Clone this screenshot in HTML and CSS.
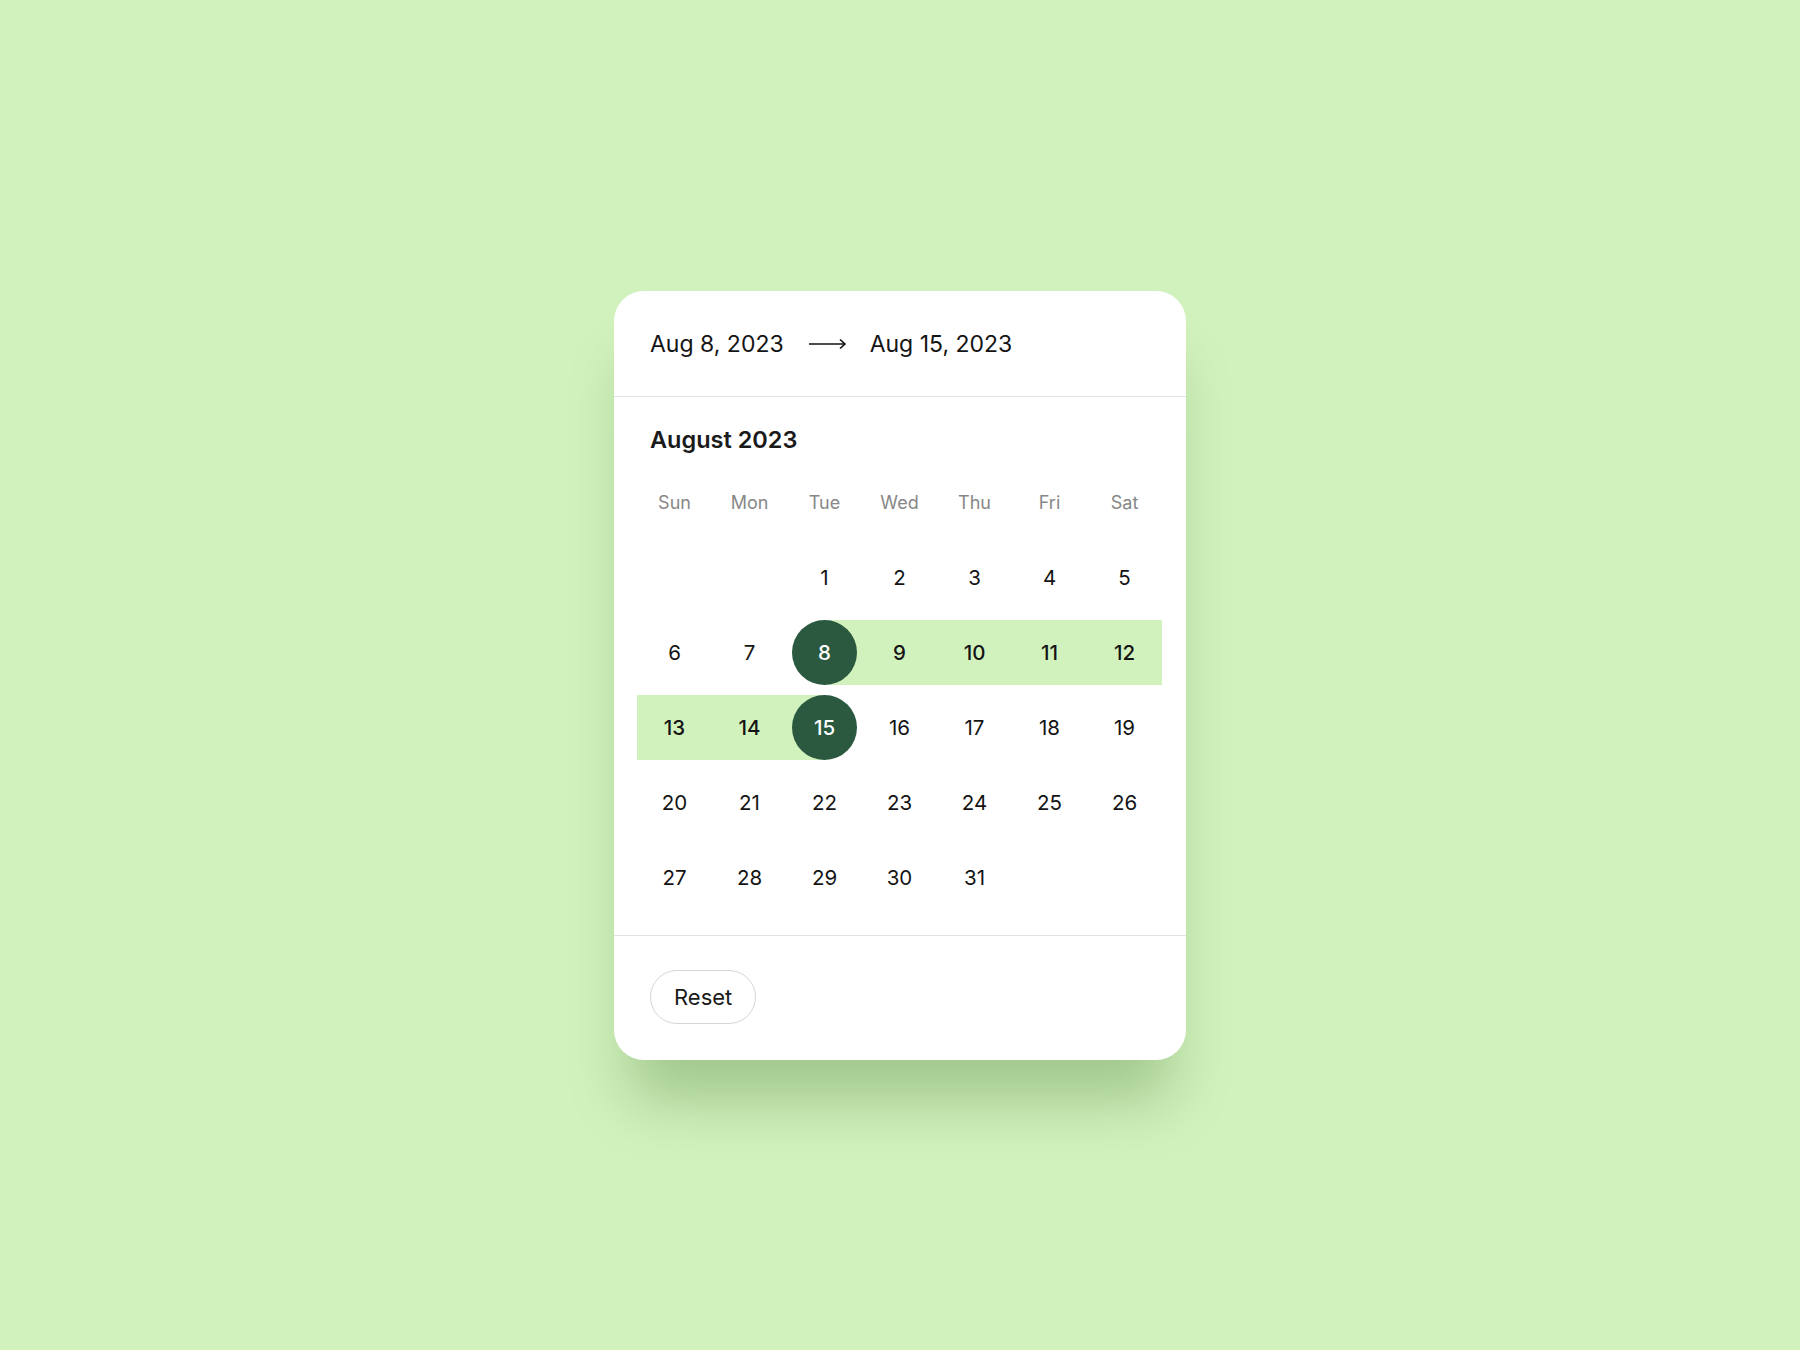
FILE: index.html
```html
<!DOCTYPE html>
<html lang="en">

<head>
    <meta charset="UTF-8">
    <meta name="viewport" content="width=device-width, initial-scale=1.0">
    <title>Date Range</title>
    <link rel="stylesheet" href="styles.css">
</head>

<body>
    <div class="picker">
        <!-- Selected range -->
        <div class="range-head">
            <span>Aug 8, 2023</span>
            <svg class="arrow" width="38" height="12" viewBox="0 0 38 12" fill="none" stroke="#111" stroke-width="1.6">
                <path d="M0 6h36" />
                <path d="M31 1.5l5 4.5-5 4.5" />
            </svg>
            <span>Aug 15, 2023</span>
        </div>

        <!-- Month grid -->
        <div class="month">
            <h2>August 2023</h2>
            <div class="grid">
                <div class="wd">Sun</div>
                <div class="wd">Mon</div>
                <div class="wd">Tue</div>
                <div class="wd">Wed</div>
                <div class="wd">Thu</div>
                <div class="wd">Fri</div>
                <div class="wd">Sat</div>

                <div class="day"></div>
                <div class="day"></div>
                <div class="day"><span>1</span></div>
                <div class="day"><span>2</span></div>
                <div class="day"><span>3</span></div>
                <div class="day"><span>4</span></div>
                <div class="day"><span>5</span></div>

                <div class="day"><span>6</span></div>
                <div class="day"><span>7</span></div>
                <div class="day start"><span>8</span></div>
                <div class="day in-range"><span>9</span></div>
                <div class="day in-range"><span>10</span></div>
                <div class="day in-range"><span>11</span></div>
                <div class="day in-range"><span>12</span></div>

                <div class="day in-range"><span>13</span></div>
                <div class="day in-range"><span>14</span></div>
                <div class="day end"><span>15</span></div>
                <div class="day"><span>16</span></div>
                <div class="day"><span>17</span></div>
                <div class="day"><span>18</span></div>
                <div class="day"><span>19</span></div>

                <div class="day"><span>20</span></div>
                <div class="day"><span>21</span></div>
                <div class="day"><span>22</span></div>
                <div class="day"><span>23</span></div>
                <div class="day"><span>24</span></div>
                <div class="day"><span>25</span></div>
                <div class="day"><span>26</span></div>

                <div class="day"><span>27</span></div>
                <div class="day"><span>28</span></div>
                <div class="day"><span>29</span></div>
                <div class="day"><span>30</span></div>
                <div class="day"><span>31</span></div>
                <div class="day"></div>
                <div class="day"></div>
            </div>
        </div>

        <div class="picker-foot">
            <button class="reset-btn">Reset</button>
        </div>
    </div>
</body>

</html>
```

FILE: styles.css
```css
* {
    margin: 0;
    padding: 0;
    box-sizing: border-box;
    font-family: Inter, "Noto Sans", sans-serif;
}

body {
    background-color: #d2f2bd;
    min-height: 100vh;
    display: flex;
    justify-content: center;
    align-items: center;
    color: #141414;
}

.picker {
    width: 572px;
    background-color: white;
    border-radius: 30px;
    box-shadow: 0 55px 60px -15px rgba(60, 110, 40, 0.32);
}

.range-head {
    height: 106px;
    display: flex;
    align-items: center;
    padding: 2px 36px 0;
    font-size: 23px;
    border-bottom: 1px solid #e2e2e2;
}

.arrow {
    margin: 0 23px 0 25px;
}

.month {
    padding: 28px 23px 25px;
    border-bottom: 1px solid #e2e2e2;
}

.month h2 {
    font-size: 23.5px;
    font-weight: 600;
    line-height: 30px;
    padding-left: 13px;
    margin-bottom: 15px;
    color: #1a1a1a;
}

.grid {
    display: grid;
    grid-template-columns: repeat(7, 75px);
    grid-auto-rows: 65px;
    row-gap: 10px;
}

.wd {
    display: flex;
    justify-content: center;
    align-items: center;
    font-size: 18px;
    color: #878787;
}

.day {
    display: flex;
    justify-content: center;
    align-items: center;
    font-size: 20.5px;
    padding-top: 1px;
}

.day span {
    width: 65px;
    height: 65px;
    border-radius: 50%;
    display: flex;
    justify-content: center;
    align-items: center;
}

.day.in-range {
    background-color: #d2f2bd;
    font-weight: 500;
}

.day.start {
    background: linear-gradient(to right, transparent 50%, #d2f2bd 50%);
}

.day.end {
    background: linear-gradient(to right, #d2f2bd 50%, transparent 50%);
}

.day.start span,
.day.end span {
    background-color: #2a5940;
    color: white;
    font-weight: 500;
}

.picker-foot {
    padding: 34px 36px 36px;
}

.reset-btn {
    height: 54px;
    padding: 0 23px;
    border: 1.5px solid #d6d6d6;
    border-radius: 27px;
    background-color: white;
    font-size: 22px;
    color: #1a1a1a;
    cursor: pointer;
}
```
